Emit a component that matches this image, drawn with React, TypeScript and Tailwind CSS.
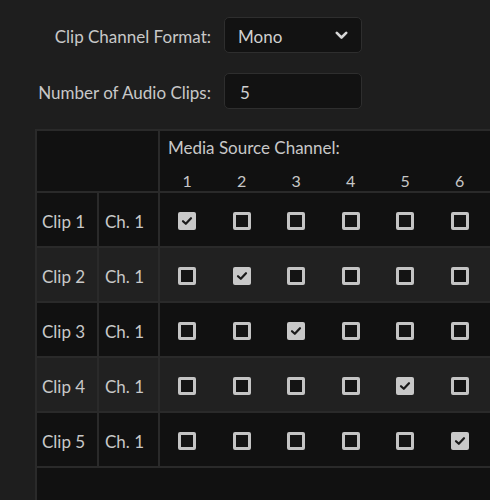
import React from "react";

const font = { fontFamily: "Lato, 'Open Sans', sans-serif" };

function Box({ checked }: { checked: boolean }) {
  if (checked) {
    return (
      <div className="w-[18px] h-[18px] rounded-[2px] bg-[#c8c8c8] flex items-center justify-center">
        <svg width="12" height="10" viewBox="0 0 12 10">
          <path d="M2 5.2 L4.8 7.8 L10 2.2" fill="none" stroke="#1a1a1a" strokeWidth="2.2" strokeLinecap="round" strokeLinejoin="round" />
        </svg>
      </div>
    );
  }
  return <div className="w-[18px] h-[18px] rounded-[2px] border-[3px] border-[#c4c4c4] bg-[#141414]" />;
}

export default function App() {
  const clips = [1, 2, 3, 4, 5];
  const checkedCol: Record<number, number> = { 1: 1, 2: 2, 3: 3, 4: 5, 5: 6 };
  const chans = [1, 2, 3, 4, 5, 6];
  return (
    <div className="w-[490px] h-[500px] overflow-hidden bg-[#1e1e1e] text-[#c8c8c8]" style={font}>
      <div className="pt-[17px] flex flex-col gap-[20px]">
        <div className="flex items-center">
          <div className="w-[211px] text-right text-[17px] leading-[20px] pt-[4px]">Clip Channel Format:</div>
          <div className="ml-[13px] w-[138px] h-[36px] rounded-[5px] border border-[#2e2e2e] bg-[#121212] flex items-center justify-between pl-[13px] pr-[13px]">
            <span className="text-[17px] leading-[20px] pt-[3px] text-[#d0d0d0]">Mono</span>
            <svg width="13" height="9" viewBox="0 0 13 9">
              <path d="M1.8 1.8 L6.5 6.5 L11.2 1.8" fill="none" stroke="#d6d6d6" strokeWidth="2.6" strokeLinecap="round" strokeLinejoin="round" />
            </svg>
          </div>
        </div>
        <div className="flex items-center">
          <div className="w-[211px] text-right text-[17px] leading-[20px] pt-[4px]">Number of Audio Clips:</div>
          <div className="ml-[13px] w-[138px] h-[36px] rounded-[5px] border border-[#2e2e2e] bg-[#121212] flex items-center pl-[15px]">
            <span className="text-[17px] leading-[20px] pt-[3px] text-[#d0d0d0]">5</span>
          </div>
        </div>
      </div>

      <div className="mt-[20px] ml-[35px] w-[480px] border-t-2 border-l-2 border-[#2a2a2a] bg-[#111111]">
        <div className="flex h-[62px] border-b-2 border-[#2a2a2a]">
          <div className="w-[123px] border-r-2 border-[#2a2a2a]" />
          <div className="flex flex-col">
            <div className="pl-[8px] pt-[6px] text-[17px] leading-[22px]">Media Source Channel:</div>
            <div className="flex mt-[13px]">
              {chans.map((c) => (
                <div key={c} className="w-[54.5px] text-center text-[16px] leading-[18px]">{c}</div>
              ))}
            </div>
          </div>
        </div>
        {clips.map((clip, i) => (
          <div
            key={clip}
            className={`flex h-[55px] border-b-2 border-[#2a2a2a] ${i % 2 === 1 ? "bg-[#212121]" : "bg-[#111111]"}`}
          >
            <div className="w-[62px] border-r-2 border-[#2a2a2a] flex items-center pl-[5px] pt-[4px] text-[17px]">Clip {clip}</div>
            <div className="w-[61px] border-r-2 border-[#2a2a2a] flex items-center pl-[6px] pt-[4px] text-[17px]">Ch. 1</div>
            <div className="flex items-center pt-[3px]">
              {chans.map((c) => (
                <div key={c} className="w-[54.5px] flex justify-center">
                  <Box checked={c === checkedCol[clip]} />
                </div>
              ))}
            </div>
          </div>
        ))}
        <div className="h-[60px]" />
      </div>
    </div>
  );
}
